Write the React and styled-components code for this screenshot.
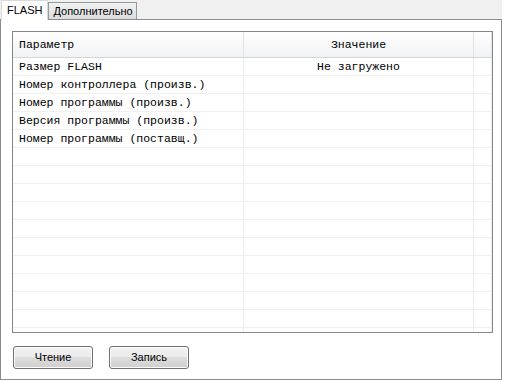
import styled, { createGlobalStyle } from "styled-components"

const GlobalStyle = createGlobalStyle`
  html, body {
    margin: 0;
    padding: 0;
    background: #ffffff;
  }
`;

const Window = styled.div`
  width: 505px;
  height: 382px;
  display: flex;
  flex-direction: column;
  background: #ffffff;
  font-family: "Liberation Sans", Arial, sans-serif;
  overflow: hidden;
`;

const TabBar = styled.div`
  height: 20px;
  display: flex;
  align-items: flex-end;
  background: #f0f0f0;
  margin-right: 3px;
  padding-left: 1px;
  box-sizing: border-box;
  border-bottom: 1px solid #898c95;
`;

const Tab = styled.div`
  box-sizing: border-box;
  font-size: 11px;
  color: #000;
  padding: ${p => (p.$active ? "0 5px" : "0 3px 0 4px")};
  border: 1px solid;
  border-bottom: none;
  background: ${p => (p.$active ? "#ffffff" : "linear-gradient(#f2f2f2, #dcdcdc)")};
  height: ${p => (p.$active ? "20px" : "17px")};
  margin-bottom: ${p => (p.$active ? "-1px" : "0")};
  line-height: ${p => (p.$active ? "18px" : "16px")};
  border-color: ${p => (p.$active ? "#d9d9d9" : "#919b9c")};
`;

const Pane = styled.div`
  flex: none;
  height: 360px;
  margin-right: 3px;
  box-sizing: border-box;
  border-left: 1px solid #898c95;
  border-right: 1px solid #898c95;
  border-bottom: 1px solid #898c95;
  padding: 11px 9px 0 11px;
  display: flex;
  flex-direction: column;
  gap: 13px;
`;

const Table = styled.div`
  width: 481px;
  height: 302px;
  box-sizing: border-box;
  border: 1px solid #828790;
  overflow: hidden;
  background: #fff;
`;

const Row = styled.div`
  display: grid;
  grid-template-columns: 231px 230px 18px;
  height: ${p => (p.$head ? "26px" : "18px")};
  box-sizing: border-box;
  border-bottom: 1px solid ${p => (p.$head ? "#d5d5d5" : "#f0f0f0")};
  background: ${p => (p.$head ? "linear-gradient(#ffffff, #f1f2f4)" : "#fff")};
  font-family: "Liberation Mono", "Courier New", monospace;
  font-size: 11.5px;
  color: #000;
`;

const Cell = styled.div`
  box-sizing: border-box;
  border-right: 1px solid ${p => (p.$head ? "#e3e3e3" : "#ececec")};
  padding-left: ${p => (p.$center ? "0" : "6px")};
  text-align: ${p => (p.$center ? "center" : "left")};
  line-height: ${p => (p.$head ? "25px" : "17px")};
  white-space: nowrap;
  overflow: hidden;
`;

const Buttons = styled.div`
  display: flex;
  gap: 16px;
  padding-left: 1px;
`;

const Button = styled.div`
  width: 80px;
  height: 23px;
  box-sizing: border-box;
  border: 1px solid #707070;
  border-radius: 3px;
  background: linear-gradient(#f2f2f2 0%, #ebebeb 45%, #dddddd 50%, #cfcfcf 100%);
  box-shadow: inset 0 0 0 1px #fcfcfc;
  font-size: 11px;
  line-height: 21px;
  text-align: center;
  color: #000;
`;

const rows = [
  ["Размер FLASH", "Не загружено"],
  ["Номер контроллера (произв.)", ""],
  ["Номер программы (произв.)", ""],
  ["Версия программы (произв.)", ""],
  ["Номер программы (поставщ.)", ""],
];
while (rows.length < 16) rows.push(["", ""]);

export default function App() {
  return (
    <Window>
      <GlobalStyle />
      <TabBar>
        <Tab $active>FLASH</Tab>
        <Tab>Дополнительно</Tab>
      </TabBar>
      <Pane>
        <Table>
          <Row $head>
            <Cell $head>Параметр</Cell>
            <Cell $head $center>Значение</Cell>
            <Cell $head />
          </Row>
          {rows.map((r, i) => (
            <Row key={i}>
              <Cell>{r[0]}</Cell>
              <Cell $center>{r[1]}</Cell>
              <Cell />
            </Row>
          ))}
        </Table>
        <Buttons>
          <Button>Чтение</Button>
          <Button>Запись</Button>
        </Buttons>
      </Pane>
    </Window>
  );
}
